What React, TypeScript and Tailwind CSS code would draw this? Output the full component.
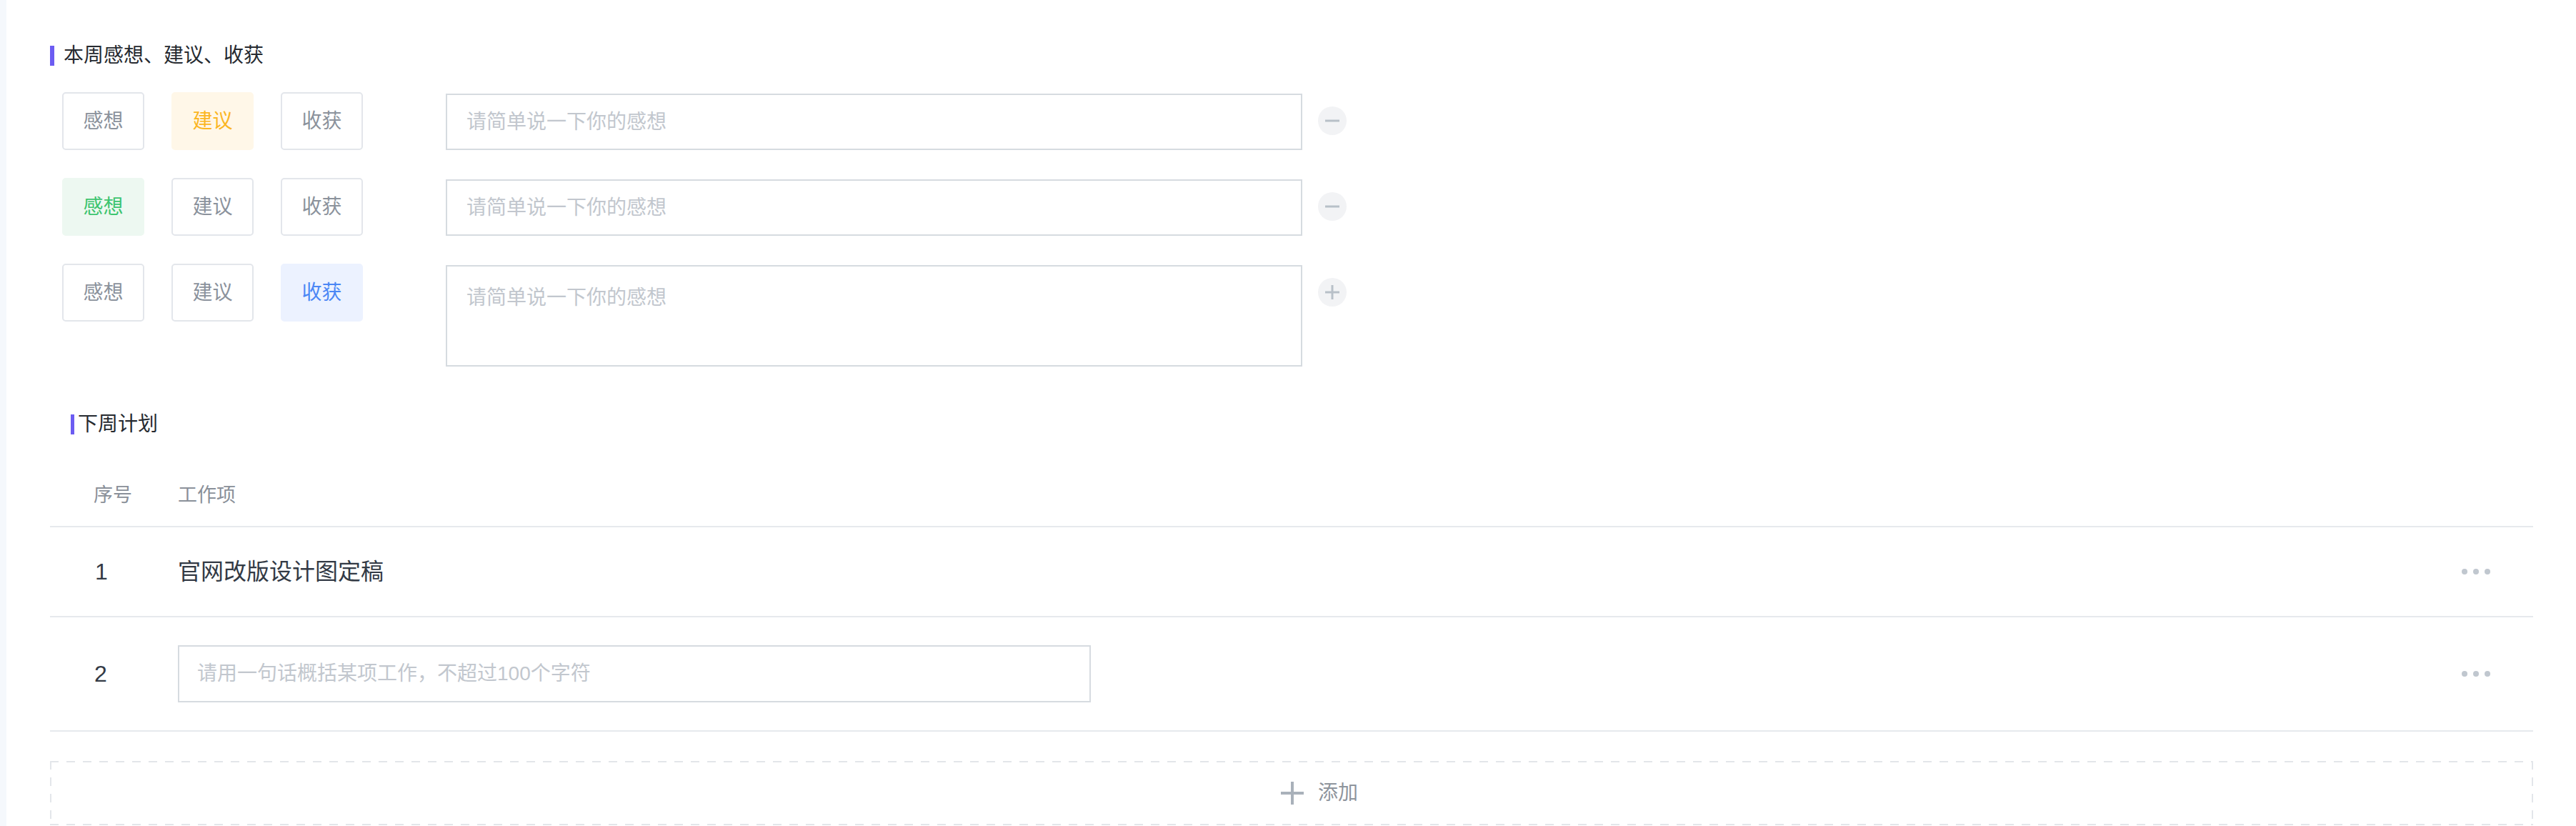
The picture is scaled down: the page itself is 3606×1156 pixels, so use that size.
import { useState } from "react";

type Kind = "think" | "advice" | "gain";

const kinds: { key: Kind; label: string; active: string }[] = [
  { key: "think", label: "感想", active: "bg-[#edf8f1] text-[#3dc46f] border-[#edf8f1]" },
  { key: "advice", label: "建议", active: "bg-[#fff7e8] text-[#fbb623] border-[#fff7e8]" },
  { key: "gain", label: "收获", active: "bg-[#ecf2ff] text-[#4b87f5] border-[#ecf2ff]" },
];

function SectionTitle({ text, compact }: { text: string; compact?: boolean }) {
  return (
    <div className={`flex items-center ${compact ? "gap-[5px] ml-[29px]" : "gap-[13px]"}`}>
      <span className={`${compact ? "w-[5px]" : "w-[6px]"} h-[28px] bg-[#6c5cf2]`} />
      <span className="text-[28px] leading-[28px] text-[#262a30]">{text}</span>
    </div>
  );
}

function CircleBtn({ plus }: { plus?: boolean }) {
  return (
    <button className="mt-[20px] w-[40px] h-[40px] rounded-full bg-[#f2f3f5] flex items-center justify-center shrink-0">
      <svg width="20" height="20" viewBox="0 0 20 20">
        <path d="M0 10H20" stroke="#b8c0c8" strokeWidth="3" />
        {plus && <path d="M10 0V20" stroke="#b8c0c8" strokeWidth="3" />}
      </svg>
    </button>
  );
}

function Dots() {
  return (
    <div className="flex gap-[8px] pr-[60px]">
      <span className="w-[8px] h-[8px] rounded-full bg-[#c0c7cf]" />
      <span className="w-[8px] h-[8px] rounded-full bg-[#c0c7cf]" />
      <span className="w-[8px] h-[8px] rounded-full bg-[#c0c7cf]" />
    </div>
  );
}

export default function App() {
  const [rows, setRows] = useState<Kind[]>(["advice", "think", "gain"]);

  const pick = (i: number, k: Kind) => {
    const next = [...rows];
    next[i] = k;
    setRows(next);
  };

  return (
    <div className="w-[3606px] h-[1156px] bg-white flex overflow-hidden font-['Liberation_Sans','Noto_Sans_CJK_SC',sans-serif]">
      <div className="w-[9px] h-full bg-[#f5f8fc] shrink-0" />
      <div className="flex-1 pl-[61px] pr-[60px] pt-[64px]">
        <SectionTitle text="本周感想、建议、收获" />

        <div className="mt-[37px] pl-[17px] flex flex-col gap-[39px]">
          {rows.map((sel, i) => (
            <div key={i} className="flex items-start">
              <div className="flex gap-[38px] w-[537px] shrink-0">
                {kinds.map((k) => (
                  <button
                    key={k.key}
                    onClick={() => pick(i, k.key)}
                    className={`w-[115px] h-[81px] rounded-[5px] border-2 text-[28px] flex items-center justify-center ${
                      sel === k.key ? k.active : "border-[#e3e6eb] text-[#8b929c] bg-white"
                    }`}
                  >
                    {k.label}
                  </button>
                ))}
              </div>
              {i === rows.length - 1 ? (
                <textarea
                  placeholder="请简单说一下你的感想"
                  className="mt-[2px] w-[1199px] h-[142px] border-2 border-[#d6dbe0] pl-[27px] pt-[24px] text-[28px] leading-[40px] resize-none outline-none placeholder:text-[#c2c7ce]"
                />
              ) : (
                <input
                  placeholder="请简单说一下你的感想"
                  className="mt-[2px] w-[1199px] h-[79px] border-2 border-[#d6dbe0] pl-[27px] text-[28px] outline-none placeholder:text-[#c2c7ce]"
                />
              )}
              <div className="ml-[22px]">
                <CircleBtn plus={i === rows.length - 1} />
              </div>
            </div>
          ))}
        </div>

        <div className="mt-[67px]">
          <SectionTitle text="下周计划" compact />
        </div>

        <div className="mt-[42px]">
          <div className="flex items-center h-[88px] border-b-2 border-[#e6e9ed] text-[27px] text-[#8a9099]">
            <div className="w-[179px] pl-[61px]">序号</div>
            <div>工作项</div>
          </div>

          <div className="flex items-center h-[126px] border-b-2 border-[#e6e9ed] text-[#333a45]">
            <div className="w-[179px] pl-[63px] text-[32px]">1</div>
            <div className="flex-1 text-[32px]">官网改版设计图定稿</div>
            <Dots />
          </div>

          <div className="flex items-center h-[160px] border-b-2 border-[#e6e9ed] text-[#333a45]">
            <div className="w-[179px] pl-[62px] text-[32px]">2</div>
            <div className="flex-1">
              <input
                placeholder="请用一句话概括某项工作，不超过100个字符"
                className="w-[1278px] h-[80px] border-2 border-[#d6dbe0] pl-[25px] text-[28px] outline-none placeholder:text-[#c2c7ce]"
              />
            </div>
            <Dots />
          </div>

          <button className="mt-[41px] w-full h-[90px] flex items-center justify-center gap-[20px] pl-[78px] text-[28px] text-[#8e949c] [background-image:repeating-linear-gradient(90deg,#e3e6ea_0_12px,transparent_12px_23px),repeating-linear-gradient(90deg,#e3e6ea_0_12px,transparent_12px_23px),repeating-linear-gradient(180deg,#e3e6ea_0_12px,transparent_12px_23px),repeating-linear-gradient(180deg,#e3e6ea_0_12px,transparent_12px_23px)] [background-size:100%_2px,100%_2px,2px_100%,2px_100%] [background-position:top_left,bottom_left,top_left,top_right] bg-no-repeat">
            <svg width="32" height="32" viewBox="0 0 32 32">
              <path d="M0 16H32M16 0V32" stroke="#a9b1ba" strokeWidth="4" />
            </svg>
            <span>添加</span>
          </button>
        </div>
      </div>
    </div>
  );
}
